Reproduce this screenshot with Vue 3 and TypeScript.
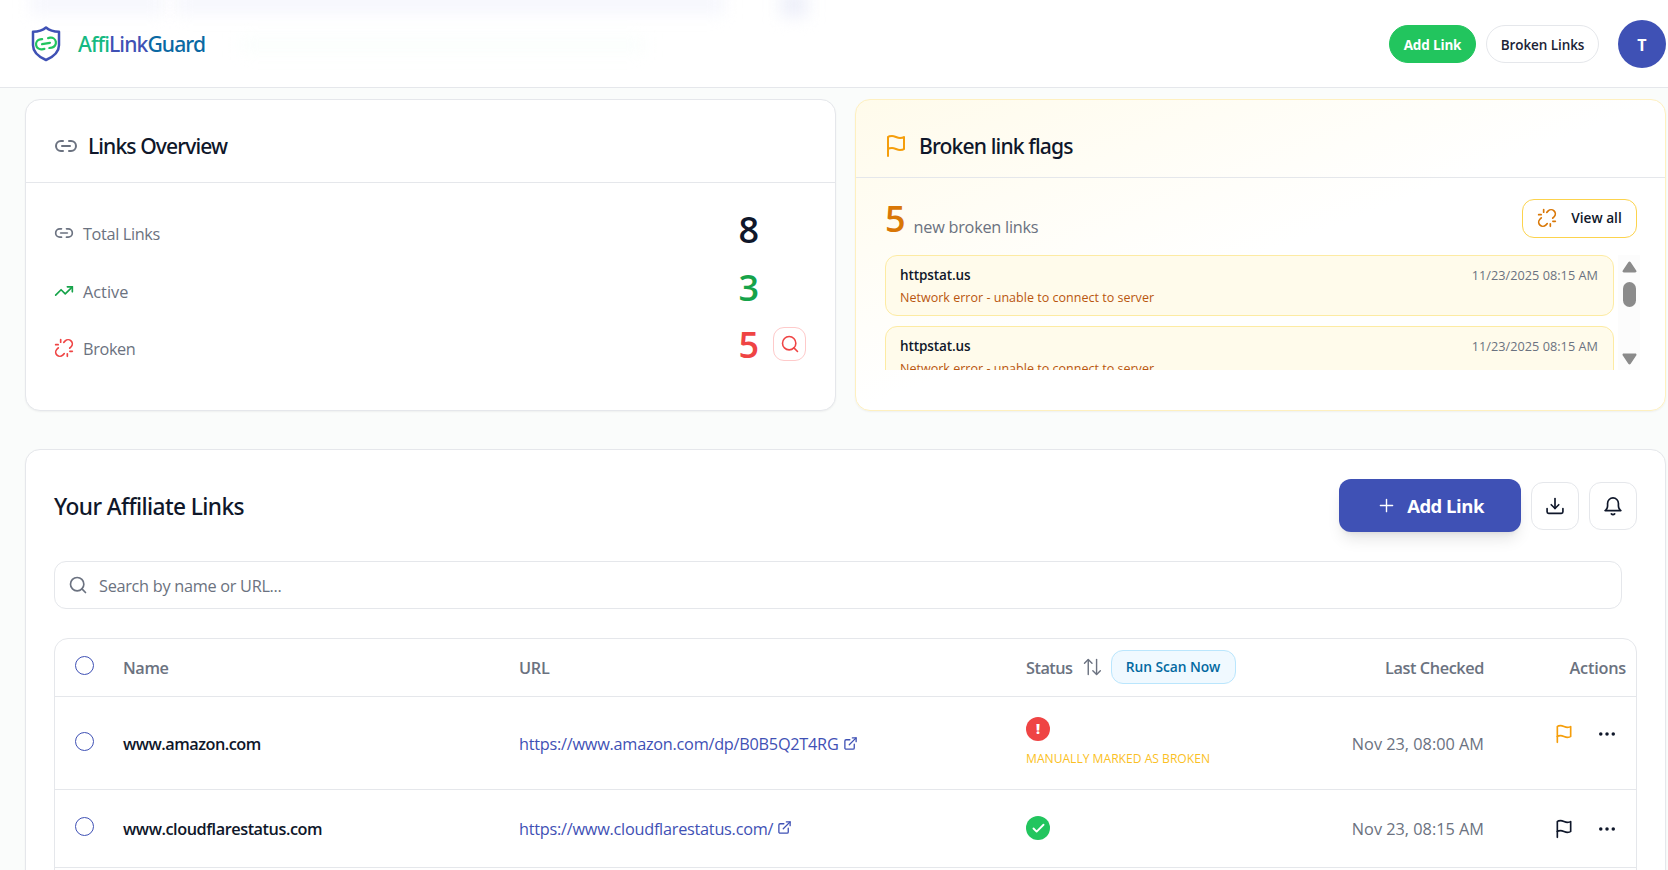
<script setup lang="ts">
import { h } from 'vue'
import type { FunctionalComponent } from 'vue'

type IconName =
  | 'link' | 'trend' | 'unlink' | 'search' | 'flag' | 'plus'
  | 'download' | 'bell' | 'external' | 'sort' | 'dots' | 'check'

const glyphs: Record<IconName, string[]> = {
  link: ['M9 17H7A5 5 0 0 1 7 7h2', 'M15 7h2a5 5 0 1 1 0 10h-2', 'M8 12h8'],
  trend: ['M22 7l-8.500 8.500-5-5L2 17', 'M16 7h6v6'],
  unlink: [
    'm18.840 12.250 1.720-1.710h-.020a5.004 5.004 0 0 0-.120-7.070 5.006 5.006 0 0 0-6.950 0l-1.720 1.710',
    'm5.170 11.750-1.710 1.710a5.004 5.004 0 0 0 .120 7.070 5.006 5.006 0 0 0 6.950 0l1.710-1.710',
    'M8 2v3', 'M2 8h3', 'M16 19v3', 'M19 16h3',
  ],
  search: ['M11 3a8 8 0 1 0 0 16a8 8 0 1 0 0-16', 'm21 21-4.300-4.300'],
  flag: ['M4 15s1-1 4-1 5 2 8 2 4-1 4-1V3s-1 1-4 1-5-2-8-2-4 1-4 1z', 'M4 22v-7'],
  plus: ['M5 12h14', 'M12 5v14'],
  download: ['M12 3v12', 'm7.500 10.500 4.500 4.500 4.500-4.500', 'M2.500 15v4a1.800 1.800 0 0 0 1.800 1.800h15.400a1.800 1.800 0 0 0 1.800-1.800v-4'],
  bell: ['M12 2.300A6.500 6.500 0 0 0 5.500 8.800V12c0 2-1 4.200-3 5.500h19c-2-1.300-3-3.500-3-5.500V8.800A6.500 6.500 0 0 0 12 2.300z', 'M10 21.500a2.800 2.800 0 0 0 4 0'],
  external: ['M15 3h6v6', 'M10 14 21 3', 'M18 13v6a2 2 0 0 1-2 2H5a2 2 0 0 1-2-2V8a2 2 0 0 1 2-2h6'],
  sort: ['M7.500 21V3.500', 'm3 7.500 4.500-4.500 4.500 4.500', 'M17.500 3v17.500', 'm13 16.500 4.500 4.500 4.500-4.500'],
  dots: ['M4.500 12h.01', 'M12 12h.01', 'M19.500 12h.01'],
  check: ['M20 6 9 17l-5-5'],
}

const Icon: FunctionalComponent<{ name: IconName; size?: number; stroke?: number }> = (p) =>
  h(
    'svg',
    {
      width: p.size ?? 20,
      height: p.size ?? 20,
      viewBox: '0 0 24 24',
      fill: 'none',
      stroke: 'currentColor',
      'stroke-width': p.stroke ?? 2,
      'stroke-linecap': 'round',
      'stroke-linejoin': 'round',
    },
    glyphs[p.name].map((d) => h('path', { d })),
  )
Icon.props = ['name', 'size', 'stroke']

interface Stat { label: string; value: number; icon: IconName; tone: string; action?: boolean }
const stats: Stat[] = [
  { label: 'Total Links', value: 8, icon: 'link', tone: 'total' },
  { label: 'Active', value: 3, icon: 'trend', tone: 'active' },
  { label: 'Broken', value: 5, icon: 'unlink', tone: 'broken', action: true },
]

const flags = [
  { id: 1, host: 'httpstat.us', when: '11/23/2025 08:15 AM', error: 'Network error - unable to connect to server' },
  { id: 2, host: 'httpstat.us', when: '11/23/2025 08:15 AM', error: 'Network error - unable to connect to server' },
]

interface LinkRow { name: string; url: string; broken: boolean; note?: string; checked: string }
const links: LinkRow[] = [
  {
    name: 'www.amazon.com',
    url: 'https://www.amazon.com/dp/B0B5Q2T4RG',
    broken: true,
    note: 'MANUALLY MARKED AS BROKEN',
    checked: 'Nov 23, 08:00 AM',
  },
  { name: 'www.cloudflarestatus.com', url: 'https://www.cloudflarestatus.com/', broken: false, checked: 'Nov 23, 08:15 AM' },
]
</script>

<template>
  <div class="page">
    <header class="topbar">
      <div class="haze" aria-hidden="true">
        <i class="h1" /><i class="h2" /><i class="h3" /><i class="h4" />
      </div>
      <div class="brand">
        <svg class="shield" width="32" height="38" viewBox="0 0 32 38" fill="none" stroke-linecap="round" stroke-linejoin="round">
          <path d="M16 2.500c3.500 3 8 4.200 13 4.300v13.400c0 7-5.500 11.500-13 14.800C8.500 31.700 3 27.200 3 20.200V6.800C8 6.700 12.500 5.500 16 2.500z" stroke="#3f51b5" stroke-width="2.500" />
          <g transform="rotate(-10 16 18.500)" stroke="#22c55e" stroke-width="2.200">
            <path d="M13 13.500h-2a5 5 0 0 0 0 10h2.500M19 13.500h2a5 5 0 0 1 0 10h-2.500M12 18.500h8" />
          </g>
        </svg>
        <span class="wordmark"><span class="affi">Affi</span><span class="mid">Link</span><span class="guard">Guard</span></span>
      </div>
      <nav class="nav">
        <button class="pill green">Add Link</button>
        <button class="pill plain">Broken Links</button>
        <div class="avatar">T</div>
      </nav>
    </header>

    <main class="content">
      <div class="cards">
        <section class="card overview">
          <div class="card-head">
            <Icon name="link" :size="24" />
            <h2>Links Overview</h2>
          </div>
          <ul class="stats">
            <li v-for="s in stats" :key="s.label" :class="s.tone">
              <Icon class="stat-icon" :name="s.icon" />
              <span class="stat-label">{{ s.label }}</span>
              <span class="stat-value">{{ s.value }}</span>
              <span class="stat-action">
                <button v-if="s.action" class="find"><Icon name="search" :stroke="1.9" /></button>
              </span>
            </li>
          </ul>
        </section>

        <section class="card flagged">
          <div class="card-head">
            <Icon name="flag" :size="24" />
            <h2>Broken link flags</h2>
          </div>
          <div class="flag-summary">
            <strong>5</strong>
            <span>new broken links</span>
            <button class="view-all"><Icon name="unlink" /><b>View all</b></button>
          </div>
          <div class="scroller">
            <div class="flag-list">
              <article v-for="f in flags" :key="f.id">
                <div class="flag-top"><b>{{ f.host }}</b><time>{{ f.when }}</time></div>
                <p>{{ f.error }}</p>
              </article>
            </div>
            <div class="scrollbar">
              <svg width="15" height="12" viewBox="0 0 15 12"><path d="M6.300 1.200a1.500 1.500 0 0 1 2.400 0l5.500 8.300c.700 1 .100 2-1 2H1.800c-1.100 0-1.700-1-1-2z" fill="#8b8b8b" /></svg>
              <div class="thumb" />
              <svg class="end" width="15" height="12" viewBox="0 0 15 12"><path d="M6.300 10.800a1.500 1.500 0 0 0 2.400 0l5.500-8.300c.700-1 .100-2-1-2H1.800c-1.100 0-1.700 1-1 2z" fill="#8b8b8b" /></svg>
            </div>
          </div>
        </section>
      </div>

      <section class="card links">
        <div class="links-head">
          <h2>Your Affiliate Links</h2>
          <button class="add"><Icon name="plus" :size="21" :stroke="1.6" /><span>Add Link</span></button>
          <button class="square"><Icon name="download" /></button>
          <button class="square"><Icon name="bell" /></button>
        </div>

        <div class="search"><Icon name="search" /><span>Search by name or URL...</span></div>

        <div class="table">
          <div class="row head">
            <span class="tick" />
            <span class="th t-name">Name</span>
            <span class="th t-url">URL</span>
            <div class="status-head">
              <span class="th t-status">Status</span>
              <Icon name="sort" :stroke="1.7" />
              <button class="scan">Run Scan Now</button>
            </div>
            <span class="th t-checked right">Last Checked</span>
            <span class="th t-actions right">Actions</span>
          </div>
          <div v-for="l in links" :key="l.name" class="row" :class="l.note ? 'tall' : 'short'">
            <span class="tick" />
            <span class="name">{{ l.name }}</span>
            <a class="url">{{ l.url }}<Icon name="external" :size="15" :stroke="2.100" /></a>
            <div class="status">
              <span class="dot" :class="l.broken ? 'bad' : 'good'">
                <template v-if="l.broken">!</template>
                <Icon v-else name="check" :size="15" :stroke="3" />
              </span>
              <span v-if="l.note" class="note">{{ l.note }}</span>
            </div>
            <span class="checked right">{{ l.checked }}</span>
            <div class="actions">
              <Icon name="flag" :class="{ amber: l.broken }" />
              <Icon name="dots" :stroke="4.200" />
            </div>
          </div>
          <div class="row rest" />
        </div>
      </section>
    </main>
  </div>
</template>

<style>
html, body { background: #fafcfb; overflow: hidden; }
</style>

<style scoped>
* { box-sizing: border-box; }
.page {
  width: 1668px;
  height: 870px;
  overflow: hidden;
  background: #fafcfb;
  color: #0f172a;
  font: 400 16.3px/24px "Open Sans", "Noto Sans", sans-serif;
}
svg { display: block; flex: none; }
h2, p, ul { margin: 0; padding: 0; }
h2 { font: 500 21.1px/30px "Noto Sans", "Open Sans", sans-serif; letter-spacing: -0.92px; white-space: nowrap; }
button { display: flex; align-items: center; justify-content: center; padding: 0; font: inherit; color: inherit; background: #fff; border: 1px solid #e5e7eb; white-space: nowrap; }

.topbar { position: relative; display: flex; align-items: center; justify-content: space-between; height: 88px; padding: 0 2px 0 30px; background: #fff; border-bottom: 1px solid #e5e7eb; overflow: hidden; }
.haze { position: absolute; inset: 0; }
.haze i { position: absolute; filter: blur(8px); background: #f6f7fd; }
.haze .h1 { left: 30px; top: -8px; width: 135px; height: 22px; }
.haze .h2 { left: 175px; top: -8px; width: 550px; height: 22px; }
.haze .h3 { left: 780px; top: -8px; width: 28px; height: 25px; background: #eef0fa; }
.haze .h4 { left: 240px; top: 38px; width: 405px; height: 14px; background: #fafefc; }
.brand { position: relative; display: flex; align-items: center; gap: 16px; }
.wordmark { font: 500 21.1px/30px "Noto Sans", "Open Sans", sans-serif; letter-spacing: -0.9px; }
.affi { color: #15b981; }
.mid { color: #3f51b5; }
.guard { color: #0b69a3; }
.nav { position: relative; display: flex; align-items: center; }
.pill { height: 38px; border-radius: 19px; font-size: 13.5px; font-weight: 600; padding-top: 2px; }
.green { width: 87px; background: #22c55e; border-color: #22c55e; color: #fff; font-weight: 700; letter-spacing: -0.15px; }
.plain { width: 113px; margin-left: 10px; letter-spacing: -0.08px; color: #1b2336; }
.avatar { width: 48px; height: 48px; margin-left: 19px; border-radius: 50%; background: #3f51b5; color: #fff; font-size: 16px; font-weight: 700; line-height: 50px; text-align: center; }

.content { padding: 11px 2px 0 25px; }
.cards { display: grid; grid-template-columns: 811px 811px; gap: 19px; }
.card { background: #fff; border: 1px solid #e5e7eb; border-radius: 15px; box-shadow: 0 1px 2px rgb(0 0 0 / 0.05); }
.overview, .flagged { height: 312px; }
.card-head { display: flex; align-items: center; border-bottom: 1px solid #e5e7eb; }
.overview .card-head { height: 83px; padding: 10px 0 0 28px; gap: 10px; color: #6b7280; }
.overview .card-head h2 { color: #0f172a; }
.flagged .card-head { height: 78px; padding: 15px 0 0 28px; gap: 11px; color: #f59e0b; }
.flagged .card-head h2 { color: #0f172a; letter-spacing: -0.86px; }
.stats { list-style: none; padding: 22px 29px 0 28px; }
.stats li { display: flex; align-items: center; height: 57.700px; }
.stat-icon { margin-bottom: 2px; }
.stat-label { flex: 1; margin-left: 9px; color: #6b7280; letter-spacing: -0.36px; }
.stat-value { font-size: 36px; font-weight: 600; line-height: 40px; margin-top: -8px; }
.stat-action { width: 47px; padding-left: 14px; margin-top: -10px; }
.total .stat-icon { color: #6b7280; }
.active .stat-icon, .active .stat-value { color: #16a34a; }
.active .stat-label { letter-spacing: 0; }
.broken .stat-icon, .broken .stat-value { color: #ef4444; }
.find { width: 33px; height: 34px; border-radius: 11px; border-color: #fecaca; color: #ef4444; }

.flagged { background: linear-gradient(to bottom right, #fffbeb 0%, #fff 50%, #fff 100%); border-color: #fef0c0; }
.flag-summary { display: flex; align-items: center; height: 77px; padding: 0 28px 0 29px; color: #6b7280; }
.flag-summary strong { font-size: 36px; font-weight: 600; line-height: 40px; color: #d97706; margin-top: 5px; }
.flag-summary span { margin-left: 8px; margin-top: 20px; letter-spacing: -0.26px; }
.view-all { width: 115px; height: 39px; margin: 3px 0 0 auto; border-color: #fcd34d; border-radius: 12px; color: #d97706; gap: 14px; }
.view-all b { color: #0f172a; font-size: 13.7px; font-weight: 600; }
.scroller { display: flex; gap: 4px; height: 115px; margin: 0 25px 0 29px; overflow: hidden; }
.flag-list { width: 729px; }
.flag-list article { height: 61px; margin-bottom: 10px; padding: 8px 15px 0 14px; background: #fffbeb; border: 1px solid #fdeba3; border-radius: 12px; }
.flag-top { display: flex; justify-content: space-between; align-items: center; height: 22px; }
.flag-top b { font-size: 13.5px; font-weight: 600; letter-spacing: -0.1px; }
.flag-top time { font-size: 12.7px; color: #6b7280; letter-spacing: 0.03px; }
.flag-list p { font-size: 12.500px; line-height: 22px; padding-top: 1px; color: #b9560f; letter-spacing: 0.02px; }
.scrollbar { width: 22px; padding: 6px 0 5px 4px; background: #fcfcfc; display: flex; flex-direction: column; }
.thumb { width: 13px; height: 25px; margin: 9px 0 0 1px; border-radius: 7px; background: #8b8b8b; }
.end { margin-top: auto; }

.links { height: 520px; margin-top: 38px; padding: 29px 28px 0; }
.links-head { display: flex; align-items: center; height: 53px; }
.links-head h2 { margin-right: auto; padding-top: 3px; font-size: 22.700px; letter-spacing: -0.6px; }
.add { width: 182px; height: 53px; border: 0; border-radius: 12px; background: #3f51b5; color: #fff; gap: 10px; box-shadow: 0 10px 15px -3px rgb(0 0 0 / 0.1), 0 4px 6px -4px rgb(0 0 0 / 0.1); }
.add span { font-size: 18.500px; font-weight: 700; letter-spacing: -0.5px; padding-top: 1px; }
.square { width: 48px; height: 48px; margin-left: 10px; border-radius: 12px; color: #0f172a; }
.search { display: flex; align-items: center; width: 1568px; height: 48px; margin-top: 29px; padding-left: 13px; border: 1px solid #e5e7eb; border-radius: 12px; color: #6b7280; }
.search span { margin: 1px 0 0 11px; letter-spacing: -0.29px; }

.table { margin-top: 29px; border: 1px solid #e5e7eb; border-radius: 14px; }
.row { display: grid; grid-template-columns: 68px 396px 507px 260px 198px 1fr; align-items: center; border-bottom: 1px solid #e5e7eb; white-space: nowrap; padding-right: 10px; }
.head { height: 58px; color: #6b7280; }
.tall { height: 93px; }
.short { height: 78px; }
.rest { height: 90px; }
.th { font-weight: 600; padding-top: 1px; }
.t-name { letter-spacing: -0.4px; }
.t-url { letter-spacing: -0.27px; }
.t-status { letter-spacing: -0.5px; }
.t-checked { letter-spacing: -0.4px; }
.t-actions { letter-spacing: -0.22px; }
.right { text-align: right; }
.tick { width: 19px; height: 19px; margin: -4px 0 0 20px; border: 1px solid #3f51b5; border-radius: 50%; }
.tall .tick { margin-top: -3px; }
.status-head { display: flex; align-items: center; }
.status-head svg { margin: -2px 0 0 9px; }
.scan { width: 125px; height: 34px; margin: -1px 0 0 9px; border-radius: 12px; background: #f0f9ff; border-color: #bae6fd; color: #0369a1; font-size: 13.800px; font-weight: 600; letter-spacing: -0.06px; }
.name { font-weight: 600; letter-spacing: -0.5px; padding-top: 2px; }
.short .name { letter-spacing: -0.46px; }
.short .name, .short .url, .short .checked { padding-top: 0; }
.url { display: flex; align-items: center; padding-top: 2px; color: #3f51b5; letter-spacing: -0.26px; }
.url svg { margin: -2px 0 0 5px; }
.short .url svg { margin-left: 4px; }
.dot { display: flex; align-items: center; justify-content: center; width: 24px; height: 24px; border-radius: 50%; color: #fff; font-size: 14px; font-weight: 800; }
.bad { background: #ef4444; margin-top: 2px; }
.good { background: #22c55e; margin-top: -1px; }
.note { display: block; margin-top: 6px; font-size: 12.100px; color: #fbbf24; letter-spacing: 0; }
.checked { color: #6b7280; padding-top: 2px; letter-spacing: 0; }
.actions { display: flex; justify-content: flex-end; gap: 23px; padding-right: 9px; color: #0f172a; }
.tall .actions { margin-top: -18px; }
.amber { color: #f59e0b; }
</style>
